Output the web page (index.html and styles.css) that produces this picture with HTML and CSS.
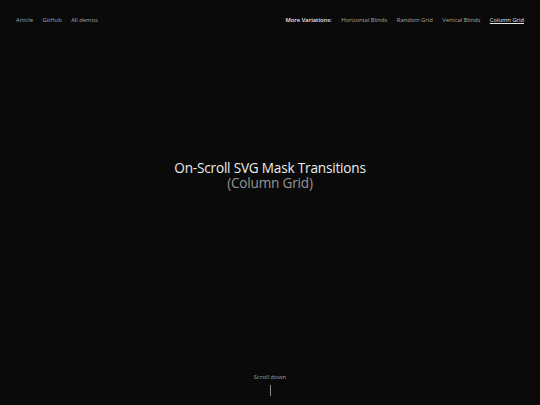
FILE: index.html
```html
<!DOCTYPE html>
<html lang="en">
<head>
<meta charset="utf-8">
<title>On-Scroll SVG Mask Transitions (Column Grid)</title>
<link rel="stylesheet" href="styles.css">
</head>
<body>
<div class="page">
  <header class="frame">
    <nav class="frame-links">
      <a href="#">Article</a>
      <a href="#">GitHub</a>
      <a href="#">All demos</a>
    </nav>
    <nav class="frame-variations">
      <span class="frame-label">More Variations:</span>
      <a href="#">Horizontal Blinds</a>
      <a href="#">Random Grid</a>
      <a href="#">Vertical Blinds</a>
      <a href="#" class="current">Column Grid</a>
    </nav>
  </header>
  <main class="intro">
    <h1 class="intro-title">
      <span class="intro-main">On-Scroll SVG Mask Transitions</span>
      <span class="intro-sub">(Column Grid)</span>
    </h1>
  </main>
  <footer class="scroll">
    <span class="scroll-text">Scroll down</span>
    <span class="scroll-line"></span>
  </footer>
</div>
</body>
</html>
```
FILE: styles.css
```css
html, body {
  margin: 0;
  padding: 0;
  background: #0a0a0a;
}
body {
  font-family: "Open Sans", "DejaVu Sans", sans-serif;
  color: #e8e8e8;
}
.page {
  width: 540px;
  height: 405px;
  display: flex;
  flex-direction: column;
  overflow: hidden;
}
.frame {
  display: flex;
  justify-content: space-between;
  align-items: center;
  padding: 16px 16px 0 16px;
  font-size: 5.8px;
  line-height: 8px;
}
.frame a {
  color: #a8a8a8;
  text-decoration: none;
}
.frame-links, .frame-variations {
  display: flex;
  gap: 9.5px;
}
.frame-label {
  color: #e6e6e6;
  font-weight: 600;
}
.frame a.current {
  color: #e6e6e6;
  text-decoration: underline;
  text-underline-offset: 1px;
}
.intro {
  flex: 1;
  display: flex;
  align-items: center;
  justify-content: center;
  padding-bottom: 48px;
}
.intro-title {
  margin: 0;
  font-weight: 400;
  font-size: 13.6px;
  text-align: center;
  color: #ececec;
  letter-spacing: -0.2px;
  display: flex;
  flex-direction: column;
  align-items: center;
  gap: 0;
}
.intro-main, .intro-sub {
  display: block;
  line-height: 15px;
  height: 15px;
}
.intro-sub {
  color: #959595;
}
.scroll {
  display: flex;
  flex-direction: column;
  align-items: center;
  gap: 4px;
  padding-bottom: 9px;
  font-size: 6px;
  line-height: 8px;
  color: #a0a0a0;
}
.scroll-line {
  width: 1px;
  height: 11px;
  background: #8a8a8a;
}
```
